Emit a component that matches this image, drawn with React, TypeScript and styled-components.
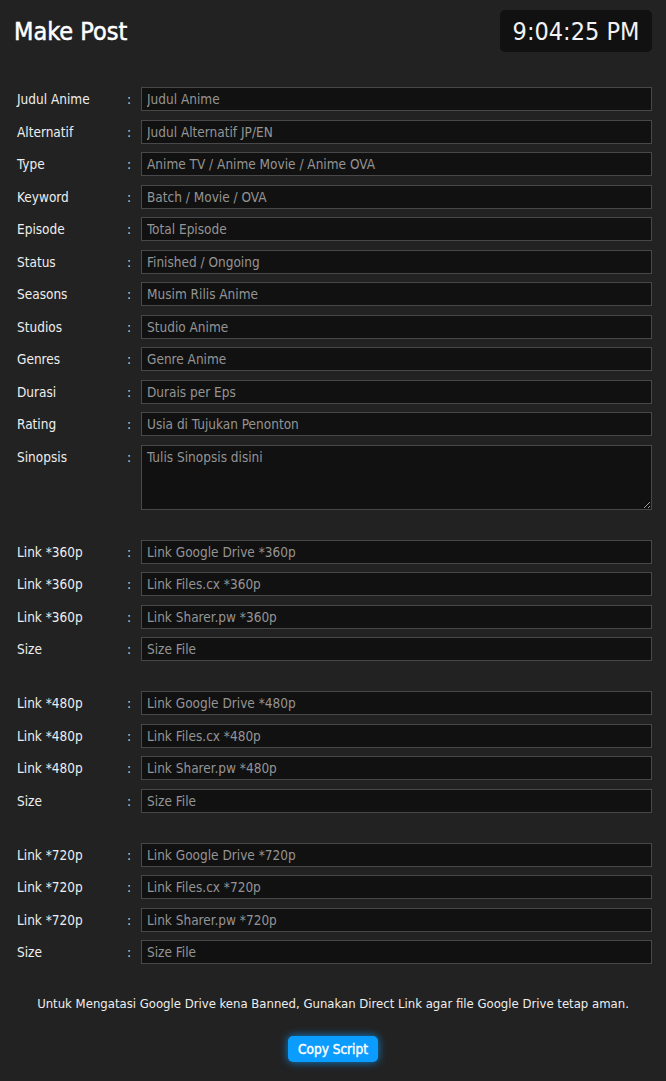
import React from 'react';
import styled, { createGlobalStyle } from 'styled-components';

const GlobalStyle = createGlobalStyle`
  html, body {
    margin: 0;
    padding: 0;
    background: #222222;
  }
  body {
    font-family: 'DejaVu Sans Condensed', 'Liberation Sans', sans-serif;
    color: #eeeeee;
  }
`;

type Field = { label: string; placeholder: string; multiline?: boolean };

const infoFields: Field[] = [
  { label: 'Judul Anime', placeholder: 'Judul Anime' },
  { label: 'Alternatif', placeholder: 'Judul Alternatif JP/EN' },
  { label: 'Type', placeholder: 'Anime TV / Anime Movie / Anime OVA' },
  { label: 'Keyword', placeholder: 'Batch / Movie / OVA' },
  { label: 'Episode', placeholder: 'Total Episode' },
  { label: 'Status', placeholder: 'Finished / Ongoing' },
  { label: 'Seasons', placeholder: 'Musim Rilis Anime' },
  { label: 'Studios', placeholder: 'Studio Anime' },
  { label: 'Genres', placeholder: 'Genre Anime' },
  { label: 'Durasi', placeholder: 'Durais per Eps' },
  { label: 'Rating', placeholder: 'Usia di Tujukan Penonton' },
  { label: 'Sinopsis', placeholder: 'Tulis Sinopsis disini', multiline: true },
];

const linkGroup = (res: string): Field[] => [
  { label: `Link *${res}`, placeholder: `Link Google Drive *${res}` },
  { label: `Link *${res}`, placeholder: `Link Files.cx *${res}` },
  { label: `Link *${res}`, placeholder: `Link Sharer.pw *${res}` },
  { label: 'Size', placeholder: 'Size File' },
];

const FieldRow: React.FC<{ field: Field }> = ({ field }) => (
  <Row $tall={field.multiline}>
    <Label>{field.label}</Label>
    <Colon>:</Colon>
    {field.multiline ? (
      <TextArea placeholder={field.placeholder} />
    ) : (
      <Input type="text" placeholder={field.placeholder} />
    )}
  </Row>
);

const App: React.FC = () => {
  const time = '9:04:25 PM';

  return (
    <Page>
      <GlobalStyle />
      <Header>
        <Title>Make Post</Title>
        <Clock>{time}</Clock>
      </Header>

      <Section>
        {infoFields.map(f => (
          <FieldRow key={f.label} field={f} />
        ))}
      </Section>

      {['360p', '480p', '720p'].map(res => (
        <Section key={res} $spaced>
          {linkGroup(res).map((f, i) => (
            <FieldRow key={i} field={f} />
          ))}
        </Section>
      ))}

      <Note>
        Untuk Mengatasi Google Drive kena Banned, Gunakan Direct Link agar file Google Drive tetap aman.
      </Note>

      <Actions>
        <CopyButton type="button">Copy Script</CopyButton>
      </Actions>
    </Page>
  );
};

const Page = styled.div`
  padding: 0 14px 19px;
`;

const Header = styled.header`
  display: flex;
  align-items: center;
  justify-content: space-between;
  padding-top: 10px;
  margin-bottom: 35px;
`;

const Title = styled.h1`
  margin: 0;
  font-size: 25px;
  font-weight: 400;
  -webkit-text-stroke: 0.5px #ffffff;
  color: #ffffff;
`;

const Clock = styled.div`
  background: #111111;
  border-radius: 5px;
  width: 152px;
  height: 42px;
  display: flex;
  align-items: center;
  justify-content: center;
  font-size: 25px;
  color: #f2f2f2;
`;

const Section = styled.section<{ $spaced?: boolean }>`
  display: flex;
  flex-direction: column;
  gap: 8.5px;
  margin-top: ${({ $spaced }) => ($spaced ? '30px' : '0')};
`;

const Row = styled.div<{ $tall?: boolean }>`
  display: grid;
  grid-template-columns: 110px 14px 1fr;
  align-items: ${({ $tall }) => ($tall ? 'start' : 'center')};
  padding-left: 3px;
  font-size: 13.5px;
`;

const Label = styled.span`
  color: #eeeeee;
  line-height: 24px;
`;

const Colon = styled.span`
  color: #cccccc;
  line-height: 24px;
`;

const fieldBase = `
  box-sizing: border-box;
  width: 100%;
  background: #111111;
  border: 1px solid #484848;
  border-radius: 0;
  color: #dddddd;
  font-family: inherit;
  font-size: 13.5px;
  padding: 0 5px;
  outline: none;
  &::placeholder {
    color: #949494;
  }
`;

const Input = styled.input`
  ${fieldBase}
  height: 24px;
`;

const TextArea = styled.textarea`
  ${fieldBase}
  height: 65px;
  padding-top: 3px;
  resize: vertical;
`;

const Note = styled.p`
  margin: 32px 0 0;
  text-align: center;
  font-size: 13px;
  color: #eeeeee;
`;

const Actions = styled.div`
  display: flex;
  justify-content: center;
  margin-top: 25px;
`;

const CopyButton = styled.button`
  background: #0a9cff;
  color: #ffffff;
  border: none;
  border-radius: 5px;
  width: 90px;
  height: 26px;
  padding: 0;
  white-space: nowrap;
  font-family: inherit;
  font-size: 13.5px;
  font-weight: 400;
  -webkit-text-stroke: 0.4px #ffffff;
  box-shadow: 0 0 8px rgba(10, 156, 255, 0.8);
  cursor: pointer;
`;

export default App;
